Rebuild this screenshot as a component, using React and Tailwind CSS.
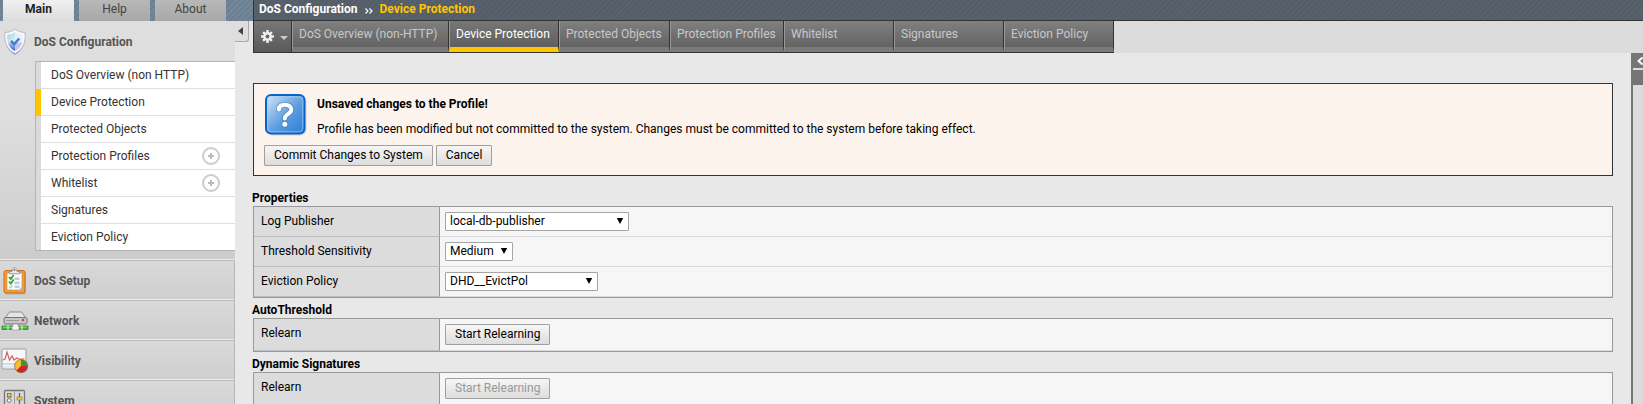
import React from "react";

const subItems = [
  { label: "DoS Overview (non HTTP)" },
  { label: "Device Protection", active: true },
  { label: "Protected Objects" },
  { label: "Protection Profiles", add: true },
  { label: "Whitelist", add: true },
  { label: "Signatures" },
  { label: "Eviction Policy" },
];

const pageTabs = [
  { label: "DoS Overview (non-HTTP)", width: "min-w-[157px]" },
  { label: "Device Protection", width: "min-w-[110px]", active: true },
  { label: "Protected Objects", width: "min-w-[111px]" },
  { label: "Protection Profiles", width: "min-w-[114px]" },
  { label: "Whitelist", width: "min-w-[110px]" },
  { label: "Signatures", width: "min-w-[110px]" },
  { label: "Eviction Policy", width: "min-w-[110px]" },
];

function ShieldIcon() {
  return (
    <svg width="24" height="28" viewBox="0 0 24 28" aria-hidden="true">
      <defs>
        <linearGradient id="shield-top" x1="0" y1="0" x2="1" y2="1">
          <stop offset="0" stopColor="#9fd0ee" />
          <stop offset="1" stopColor="#e6f3fb" />
        </linearGradient>
        <linearGradient id="shield-left" x1="0" y1="0" x2="0" y2="1">
          <stop offset="0" stopColor="#b8cdf2" />
          <stop offset="1" stopColor="#3d55d8" />
        </linearGradient>
      </defs>
      <path d="M12 3C9 5.500 6 6.200 2.500 6.100 1.500 14 3.500 22.500 12 27 20.500 22.500 22.500 14 21.500 6.100 18 6.200 15 5.500 12 3z" fill="#777" opacity=".5" />
      <path d="M12 1C9 3.600 6 4.400 2 4.300 1 13 3 21 12 25.500 21 21 23 13 22 4.300 18 4.400 15 3.600 12 1z" fill="#f8fafc" stroke="#a3abb8" strokeWidth=".8" />
      <path d="M12 4C9.500 6 7.200 6.600 4.300 6.600 4 9.500 4.200 12 4.800 14.500H12z" fill="url(#shield-top)" />
      <path d="M4.800 14.500C6 18.500 8 21 12 23V14.500z" fill="url(#shield-left)" />
      <path d="M12 4C14.500 6 16.800 6.600 19.700 6.600 20 9.500 19.800 12 19.200 14.500H12z" fill="#e9eef8" />
      <path d="M12 14.500h7.200C18 18.500 16 21 12 23z" fill="#c4c4f0" />
      <path d="M8 13l3.200 3.200 5-5.700" fill="none" stroke="#3c86c4" strokeWidth="2.600" />
    </svg>
  );
}

function ClipboardIcon() {
  return (
    <svg width="24" height="28" viewBox="0 0 24 28" aria-hidden="true">
      <rect x="1.500" y="4.500" width="21.500" height="23" rx="2" fill="#888" opacity=".4" />
      <rect x="1" y="3.500" width="21" height="22.500" rx="2" fill="#f29a35" stroke="#c87117" />
      <path d="M4 6h15v17H4z" fill="#fafcff" stroke="#b98a55" strokeWidth=".6" />
      <path d="M11.500 10.500h5v2.500h-5zM11.500 14.500h5V17h-5zM11.500 18.500h5V21h-5z" fill="#bfcbe0" />
      <path d="M15 23.500l4.500-4.500v4.500z" fill="#b5bcc8" />
      <path d="M6 10l1.800 2 2.800-4M6 14.500l1.800 2 2.800-4" fill="none" stroke="#2fa52a" strokeWidth="1.800" />
      <path d="M6 19.500l1.500 1.500 2-3" fill="none" stroke="#b7d3c0" strokeWidth="1.400" />
      <path d="M6.500 6.800V4.500h2.600C9 2 10 .8 11.500.8S14 2 14 4.500h2.600v2.300z" fill="#e9e9e9" stroke="#8c8c8c" strokeWidth=".8" />
      <circle cx="11.500" cy="3" r="1" fill="#777" />
    </svg>
  );
}

function NetworkIcon() {
  return (
    <svg width="28" height="20" viewBox="0 0 28 20" aria-hidden="true">
      <path d="M3.500 8L8 1.500Q8.500 1 9 1h11q.5 0 1 .5L25.500 8z" fill="#e5e5e5" stroke="#808080" strokeWidth=".9" />
      <rect x="3" y="6.500" width="23" height="6.500" rx="1.500" fill="#c7c7c7" stroke="#696969" strokeWidth=".9" />
      <path d="M5 9.500h13" stroke="#999" />
      <circle cx="22" cy="9" r="1.300" fill="#ee3344" />
      <path d="M1 15h26v3.500H1z" fill="#43b43c" stroke="#2d8829" strokeWidth=".8" />
      <path d="M2 16.200h24" stroke="#8be07e" />
      <path d="M7 14v5.500M21 14v5.500" stroke="#e9f5e6" />
      <path d="M12 13h5v2l1 1v3h-7v-3l1-1z" fill="#f5f5f5" stroke="#8c8c8c" strokeWidth=".6" />
    </svg>
  );
}

function VisibilityIcon() {
  return (
    <svg width="28" height="26" viewBox="0 0 28 26" aria-hidden="true">
      <rect x="1" y="1" width="24" height="20" rx="1" fill="#f8f8f8" stroke="#9b9b9b" />
      <path d="M2 15h22v2H2z" fill="#c9dff0" />
      <path d="M2 18h22v2H2z" fill="#e2ebf2" />
      <path d="M2 12l2-1 2-7 2.500 8L11 8l2 4 3-2 2 1h5.500" fill="none" stroke="#cf6266" strokeWidth="1.200" />
      <circle cx="20.500" cy="18.500" r="6.800" fill="#777" opacity=".5" />
      <circle cx="20" cy="18" r="6.500" fill="#f4bd2b" />
      <path d="M20 18V11.500A6.500 6.500 0 0 1 26.500 18z" fill="#2f9d31" />
      <path d="M20 18h6.500a6.500 6.500 0 0 1-11.100 4.600z" fill="#cc2038" />
      <circle cx="20" cy="18" r="6.500" fill="none" stroke="#7b5a2c" strokeWidth=".6" />
    </svg>
  );
}

function SystemIcon() {
  return (
    <svg width="24" height="24" viewBox="0 0 24 24" aria-hidden="true">
      <rect x="1.500" y="1.500" width="20" height="21" rx="1" fill="#dadada" stroke="#777" strokeWidth="1.300" />
      <path d="M11.500 2v20" stroke="#999" />
      <rect x="4" y="4" width="4.500" height="4.500" fill="#686868" />
      <circle cx="6.200" cy="6" r="1.600" fill="#f6cd35" />
      <circle cx="6.200" cy="11.500" r="2" fill="#eee" stroke="#777" />
      <path d="M16.500 4v15" stroke="#666" strokeWidth="1.300" />
      <rect x="14" y="8" width="5" height="3" fill="#f6cd35" stroke="#8b7436" strokeWidth=".6" />
    </svg>
  );
}

function GearIcon() {
  return (
    <svg width="13" height="13" viewBox="0 0 13 13" aria-hidden="true">
      <g fill="#f0f0f0">
        <rect x="5.300" y="0" width="2.400" height="13" />
        <rect x="0" y="5.300" width="13" height="2.400" />
        <rect x="5.300" y=".3" width="2.400" height="12.400" transform="rotate(45 6.500 6.500)" />
        <rect x="5.300" y=".3" width="2.400" height="12.400" transform="rotate(-45 6.500 6.500)" />
        <circle cx="6.500" cy="6.500" r="4.400" />
      </g>
      <circle cx="6.500" cy="6.500" r="1.900" fill="#666" />
    </svg>
  );
}

function QuestionIcon() {
  return (
    <svg width="42" height="42" viewBox="0 0 42 42" className="shrink-0" aria-hidden="true">
      <defs>
        <linearGradient id="q" x1="0" y1="0" x2="1" y2="1">
          <stop offset="0" stopColor="#d5e8fa" />
          <stop offset="0.550" stopColor="#5b9de0" />
          <stop offset="1" stopColor="#2a7cd6" />
        </linearGradient>
      </defs>
      <rect x="2" y="2.500" width="39.500" height="39" rx="6" fill="#999" opacity=".35" />
      <rect x="1" y="1" width="38.500" height="38.500" rx="5" fill="url(#q)" stroke="#0a63cc" strokeWidth="2" />
      <rect x="2.800" y="2.800" width="35" height="35" rx="3.500" fill="none" stroke="#a9d0f5" strokeWidth="1" opacity=".7" />
      <path d="M14 15.500C14 12 16.500 10.800 20 10.800s6.300 1.600 6.300 5c0 4.200-6.500 4-6.500 8.700" fill="none" stroke="#2a68b0" strokeWidth="6" strokeLinecap="round" opacity=".35" />
      <path d="M14 15.500C14 12 16.500 10.800 20 10.800s6.300 1.600 6.300 5c0 4.200-6.500 4-6.500 8.700" fill="none" stroke="#fff" strokeWidth="4" strokeLinecap="round" />
      <circle cx="19.800" cy="30.500" r="3.200" fill="#2a68b0" opacity=".35" />
      <circle cx="19.800" cy="30.300" r="2.500" fill="#fff" />
    </svg>
  );
}

function PlusIcon() {
  return (
    <svg width="18" height="18" viewBox="0 0 18 18" aria-hidden="true">
      <circle cx="9" cy="9" r="8" fill="#fff" stroke="#ccc" strokeWidth="2" />
      <path d="M9 6v6M6 9h6" stroke="#bbb" strokeWidth="2" />
    </svg>
  );
}

function Section({ icon, label }) {
  return (
    <a
      href="#"
      className="flex h-10 shrink-0 items-center border-t border-r border-b border-t-[#b9b9b9] border-r-[#b5b5b5] border-b-[#ececec] bg-linear-to-b from-[#d9d9d9] to-[#cfcfcf] pt-[2px] font-bold text-[#555]"
    >
      <span className="flex w-[34px] justify-center pr-1">{icon}</span>
      {label}
    </a>
  );
}

function NavTab({ label, active }) {
  return (
    <button
      type="button"
      className={
        "h-[21px] w-[71px] pb-1 " +
        (active
          ? "bg-linear-to-b from-[#f0f0f0] to-[#dcdcdc] font-bold text-[#222]"
          : "bg-linear-to-b from-[#b8b8b8] to-[#a8a8a8] text-[#444]")
      }
    >
      {label}
    </button>
  );
}

function Sidebar() {
  return (
    <nav className="flex w-[235px] shrink-0 flex-col overflow-hidden bg-[#d4d4d4]">
      <div className="shrink-0 border-b border-[#ececec] bg-linear-to-b from-[#dedede] from-40% to-[#cccccc]">
        <a href="#" className="flex h-10 items-center pt-[2px] font-bold text-[#555]">
          <span className="flex w-[34px] justify-center pr-1"><ShieldIcon /></span>
          DoS Configuration
        </a>
        <ul className="mb-2 ml-[35px] border-t border-b border-l border-[#b5b5b5]">
          {subItems.map((s, i) => (
            <li key={s.label} className={"flex border-l-[5px] " + (s.active ? "border-[#ffc600]" : "border-[#dadada]")}>
              <a
                href="#"
                className={
                  "flex flex-1 items-center justify-between bg-white pr-[15px] pl-[10px] text-[#333] " +
                  (i < subItems.length - 1 ? "h-[27px] border-b border-[#e0e0e0]" : "h-[26px]")
                }
              >
                {s.label}
                {s.add && <PlusIcon />}
              </a>
            </li>
          ))}
        </ul>
      </div>
      <Section icon={<ClipboardIcon />} label="DoS Setup" />
      <Section icon={<NetworkIcon />} label="Network" />
      <Section icon={<VisibilityIcon />} label="Visibility" />
      <Section icon={<SystemIcon />} label="System" />
    </nav>
  );
}

function PageTab({ label, active, width }) {
  return (
    <a
      href="#"
      className={
        "flex h-[31px] items-start border-r border-b-[5px] border-l border-r-[#333] border-l-[#999] bg-linear-to-b px-[6px] pt-[5px] " +
        width +
        (active
          ? " border-b-[#ffc600] from-[#777] to-[#5f5f5f] text-white"
          : " border-b-[#7a7a7a] from-[#808080] to-[#636363] text-[#c8c8c8]")
      }
    >
      {label}
    </a>
  );
}

function PushButton({ children, disabled }) {
  return (
    <button
      type="button"
      disabled={disabled}
      className="h-[21px] rounded-[1px] border border-[#a0a0a0] bg-linear-to-b from-[#f6f6f6] to-[#dddddd] px-[9px] leading-[19px] text-black disabled:text-[#999]"
    >
      {children}
    </button>
  );
}

function Picker({ id, value, width }) {
  return (
    <span className={"relative block " + width}>
      <select
        id={id}
        defaultValue={value}
        className="block h-[19px] w-full appearance-none rounded-[1px] border border-[#a5a5a5] bg-white pl-1 leading-[17px] text-black"
      >
        <option>{value}</option>
      </select>
      <svg width="8" height="6" viewBox="0 0 8 6" className="pointer-events-none absolute top-[6px] right-[5px]" aria-hidden="true">
        <path d="M.8 0h6.400L4 6z" fill="#000" />
      </svg>
    </span>
  );
}

function Panel({ title, rows }) {
  return (
    <section>
      <h2 className="-ml-px pt-[4px] font-bold">{title}</h2>
      <table className="w-full border-separate border-spacing-0 border border-[#999] bg-[#f6f6f6]">
        <tbody>
          {rows.map((r) => (
            <tr key={r.label}>
              <th
                scope="row"
                className="w-[186px] border-r border-b border-r-[#999] border-b-[#bebebe] bg-[#dcdcdc] py-0 pt-[6px] pl-[7px] text-left align-top font-normal"
              >
                {r.id ? <label htmlFor={r.id}>{r.label}</label> : r.label}
              </th>
              <td className="border-b border-[#dadada] p-[5px]">{r.control}</td>
            </tr>
          ))}
        </tbody>
      </table>
    </section>
  );
}

export default function App() {
  return (
    <div className="flex h-screen flex-col overflow-hidden bg-[#e8e8e8] font-[Roboto,sans-serif] text-[12px] leading-4 text-black">
      <div className="flex shrink-0">
        <div className="flex h-[21px] w-[253px] shrink-0 gap-[5px] bg-[repeating-linear-gradient(135deg,#6b8093_0px,#6b8093_2px,#75899a_3px,#75899a_4px)] pl-[3px]">
          <NavTab label="Main" active />
          <NavTab label="Help" />
          <NavTab label="About" />
        </div>
        <header className="flex h-[21px] flex-1 items-center border-b border-l border-[#333] bg-[repeating-linear-gradient(135deg,#545d68_0px,#545d68_2px,#59636d_3px,#59636d_4px)] pb-[3px] pl-[5px] font-bold text-white">
          DoS Configuration
          <svg width="8" height="6" viewBox="0 0 8 6" className="mx-[7px] mt-1" aria-hidden="true">
            <path d="M.5.5L3 3 .5 5.500M4.500.5L7 3 4.500 5.500" fill="none" stroke="#fff" strokeWidth="1.200" />
          </svg>
          <span className="text-[#ffc600]">Device Protection</span>
        </header>
      </div>
      <div className="flex min-h-0 flex-1">
        <Sidebar />
        <div className="w-[18px] shrink-0">
          <button
            type="button"
            aria-label="Collapse menu"
            className="flex h-[21px] w-[14px] items-center rounded-br-[3px] border-r border-b border-[#aaa] bg-[#dedede] pl-[3px]"
          >
            <svg width="5" height="8" viewBox="0 0 5 8" aria-hidden="true">
              <path d="M5 0v8L0 4z" fill="#444" />
            </svg>
          </button>
        </div>
        <div className="flex min-w-0 flex-1 flex-col">
          <div className="flex h-8 shrink-0 bg-[#dcdcdc]">
            <div className="flex border-b border-l border-[#333]">
              <button
                type="button"
                aria-label="Options"
                className="flex h-[31px] w-[38px] items-center gap-[6px] border-r border-[#333] bg-linear-to-b from-[#777] to-[#5a5a5a] pl-[7px]"
              >
                <GearIcon />
                <svg width="8" height="4" viewBox="0 0 8 4" className="mt-[2px]" aria-hidden="true">
                  <path d="M0 0h8L4 4z" fill="#ccc" />
                </svg>
              </button>
              {pageTabs.map((t) => (
                <PageTab key={t.label} {...t} />
              ))}
            </div>
          </div>
          <div className="flex min-h-0 flex-1">
            <main className="min-w-0 flex-1 pt-[30px] pr-[18px]">
              <div className="mb-[10px] h-[93px] border border-[#333] bg-[#fcf3ed] pt-[10px] pl-[10px]">
                <div className="flex gap-[10px] pl-px">
                  <QuestionIcon />
                  <div className="pt-[2px]">
                    <p className="font-bold">Unsaved changes to the Profile!</p>
                    <p className="pt-[9px]">
                      Profile has been modified but not committed to the system. Changes must be committed to the system before taking effect.
                    </p>
                  </div>
                </div>
                <div className="mt-2 flex gap-[3px]">
                  <PushButton>Commit Changes to System</PushButton>
                  <PushButton>Cancel</PushButton>
                </div>
              </div>
              <Panel
                title="Properties"
                rows={[
                  { label: "Log Publisher", id: "log", control: <Picker id="log" value="local-db-publisher" width="w-[184px]" /> },
                  { label: "Threshold Sensitivity", id: "sens", control: <Picker id="sens" value="Medium" width="w-[68px]" /> },
                  { label: "Eviction Policy", id: "evict", control: <Picker id="evict" value="DHD__EvictPol" width="w-[153px]" /> },
                ]}
              />
              <Panel title="AutoThreshold" rows={[{ label: "Relearn", control: <PushButton>Start Relearning</PushButton> }]} />
              <Panel title="Dynamic Signatures" rows={[{ label: "Relearn", control: <PushButton disabled>Start Relearning</PushButton> }]} />
            </main>
            <aside className="w-3 shrink-0 border-l-2 border-[#757575] bg-[#dcdcdc]">
              <button type="button" aria-label="Open help panel" className="flex h-[15px] w-full items-center bg-[#757575] pl-1">
                <svg width="6" height="8" viewBox="0 0 6 8" aria-hidden="true">
                  <path d="M5.500.5L1.500 4l4 3.500" fill="none" stroke="#fff" strokeWidth="2" />
                </svg>
              </button>
              <div className="mt-[2px] h-[15px] bg-[#757575]" />
            </aside>
          </div>
        </div>
      </div>
    </div>
  );
}
